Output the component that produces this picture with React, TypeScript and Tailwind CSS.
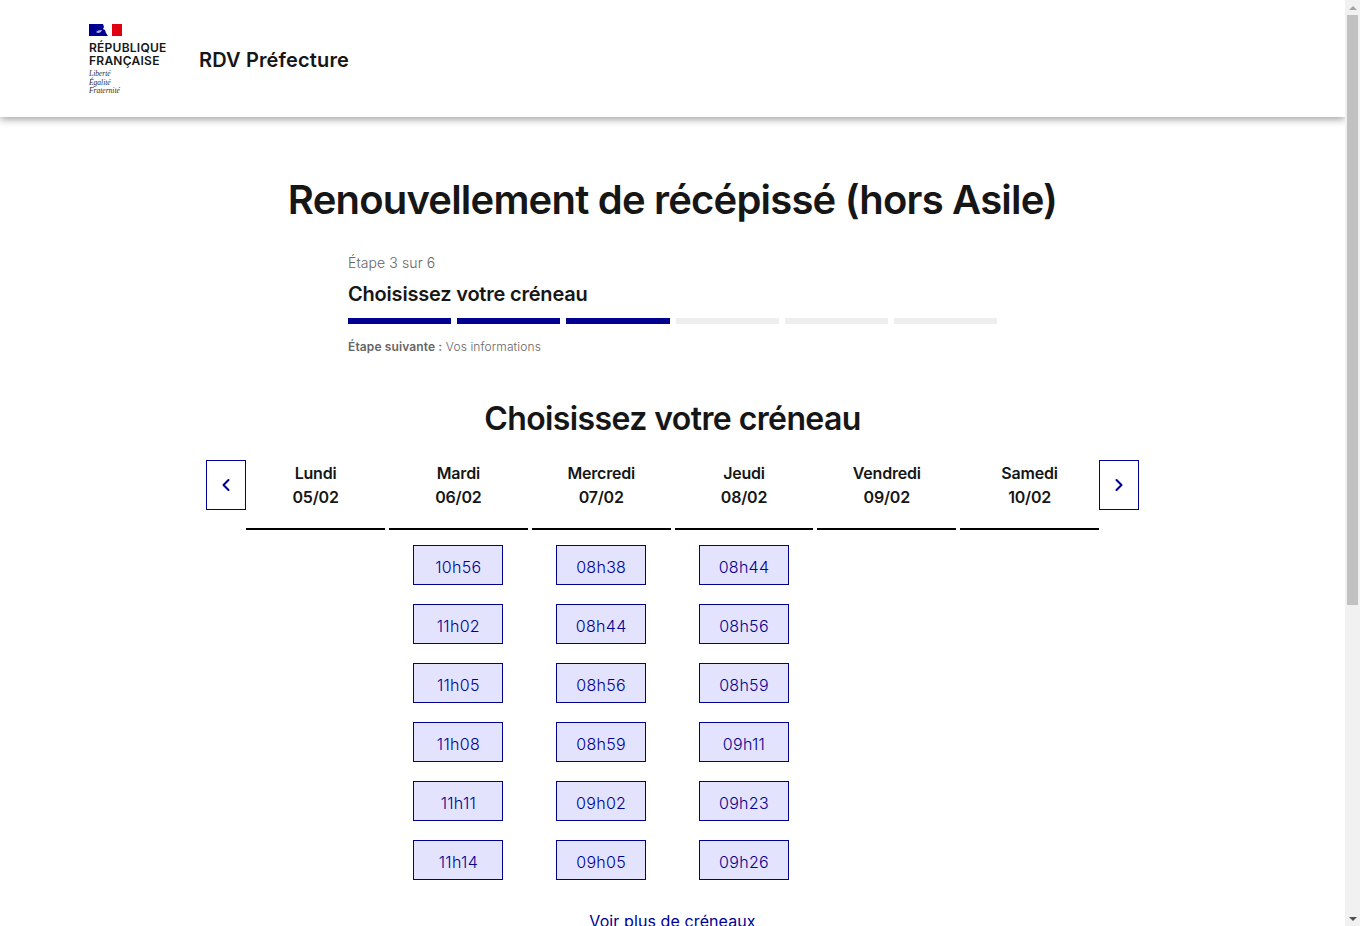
import { ChevronLeft, ChevronRight } from "lucide-react";

type Day = {
  name: string;
  date: string;
  slots: string[];
};

const days: Day[] = [
  { name: "Lundi", date: "05/02", slots: [] },
  { name: "Mardi", date: "06/02", slots: ["10h56", "11h02", "11h05", "11h08", "11h11", "11h14"] },
  { name: "Mercredi", date: "07/02", slots: ["08h38", "08h44", "08h56", "08h59", "09h02", "09h05"] },
  { name: "Jeudi", date: "08/02", slots: ["08h44", "08h56", "08h59", "09h11", "09h23", "09h26"] },
  { name: "Vendredi", date: "09/02", slots: [] },
  { name: "Samedi", date: "10/02", slots: [] },
];

const steps = [true, true, true, false, false, false];

function Logo() {
  return (
    <div className="flex flex-col w-[78px]">
      <svg width="33" height="12" viewBox="0 0 33 12">
        <rect width="33" height="12" fill="#ffffff" />
        <rect x="23" width="10" height="12" fill="#e1000f" />
        <path d="M0 0h14l1 3-1 2 2 1 1 3 2 3H0z" fill="#000091" />
        <path d="M7 8c1.500-1.500 3-2.200 6-2-.5 1-1 2-2 2.500-1.200.8-3 .6-4-.5z" fill="#aeb0dc" />
        <path d="M23 7.500c-1 1.500-2 2.500-2 4.500h2z" fill="#ffffff" />
      </svg>
      <div className="mt-[5px] text-[12px] leading-[13px] tracking-[0.25px] font-semibold text-[#161616] whitespace-nowrap">
        RÉPUBLIQUE
        <br />
        FRANÇAISE
      </div>
      <div className="mt-[3px] text-[7.500px] leading-[8.500px] italic text-[#2a2a2a] font-['Liberation_Serif',serif]">
        Liberté
        <br />
        Égalité
        <br />
        Fraternité
      </div>
    </div>
  );
}

function Scrollbar() {
  return (
    <div className="w-[15px] shrink-0 h-full bg-[#f1f1f1] flex flex-col items-center">
      <div className="h-[15px] flex items-center justify-center">
        <div className="w-0 h-0 border-x-[4px] border-x-transparent border-b-[4px] border-b-[#a3a3a3]" />
      </div>
      <div className="w-[11px] h-[590px] bg-[#c1c1c1]" />
      <div className="mt-auto h-[15px] flex items-center justify-center">
        <div className="w-0 h-0 border-x-[4px] border-x-transparent border-t-[4px] border-t-[#505050]" />
      </div>
    </div>
  );
}

export default function App() {
  return (
    <div className="flex w-[1360px] h-[926px] overflow-hidden bg-white text-[#161616] font-['Inter',sans-serif]">
      <div className="flex-1 min-w-0 flex flex-col">
        <header className="h-[117px] shrink-0 flex items-start gap-[32px] pl-[89px] pt-[24px] bg-white shadow-[0_2px_8px_rgba(0,0,0,0.4)]">
          <Logo />
          <div className="text-[20px] leading-[28px] tracking-[0.15px] font-semibold mt-[22px]">RDV Préfecture</div>
        </header>

        <main className="flex flex-col items-center">
          <h1 className="mt-[59px] text-[40px] leading-[48px] tracking-[-0.8px] font-semibold text-center">
            Renouvellement de récépissé (hors Asile)
          </h1>

          <div className="mt-[27px] w-[649px]">
            <p className="text-[14px] leading-[24px] tracking-[0.1px] font-light text-[#666666]">Étape 3 sur 6</p>
            <p className="mt-[5px] text-[20px] leading-[28px] tracking-[-0.2px] font-semibold">Choisissez votre créneau</p>
            <div className="mt-[10px] flex gap-[6px]">
              {steps.map((done, i) => (
                <div key={i} className={done ? "h-[6px] flex-1 bg-[#000091]" : "h-[6px] flex-1 bg-[#eeeeee]"} />
              ))}
            </div>
            <p className="mt-[13px] text-[12px] leading-[20px] tracking-[0.12px] font-light text-[#666666]">
              <b className="font-semibold">Étape suivante :</b> Vos informations
            </p>
          </div>

          <h2 className="mt-[42px] text-[32px] leading-[40px] tracking-[-0.6px] font-semibold text-center">Choisissez votre créneau</h2>

          <div className="mt-[21px] w-[933px] flex items-start">
            <button className="w-[40px] h-[50px] shrink-0 border border-[#000091] text-[#000091] flex items-center justify-center">
              <ChevronLeft size={20} strokeWidth={2.5} />
            </button>
            <div className="flex-1 ml-[0.2px] grid grid-cols-6 gap-x-[4px]">
              {days.map((day) => (
                <div key={day.name} className="flex flex-col items-center">
                  <div className="w-full h-[70px] border-b-2 border-black pt-[1px] text-center text-[16px] leading-[24px] tracking-[-0.2px] font-semibold">
                    {day.name}
                    <br />
                    {day.date}
                  </div>
                  <div className="mt-[15px] flex flex-col gap-[19px]">
                    {day.slots.map((slot) => (
                      <button
                        key={slot}
                        className="w-[90px] h-[40px] border border-[#000091] bg-[#e3e3fd] text-[#000091] text-[16px] font-light leading-[24px] tracking-[0.3px] pt-[3px]"
                      >
                        {slot}
                      </button>
                    ))}
                  </div>
                </div>
              ))}
            </div>
            <button className="w-[40px] h-[50px] shrink-0 border border-[#000091] text-[#000091] flex items-center justify-center">
              <ChevronRight size={20} strokeWidth={2.5} />
            </button>
          </div>

          <a href="#" className="mt-[29px] text-[16px] leading-[24px] tracking-[0.1px] text-[#000091] underline">
            Voir plus de créneaux
          </a>
        </main>
      </div>
      <Scrollbar />
    </div>
  );
}
